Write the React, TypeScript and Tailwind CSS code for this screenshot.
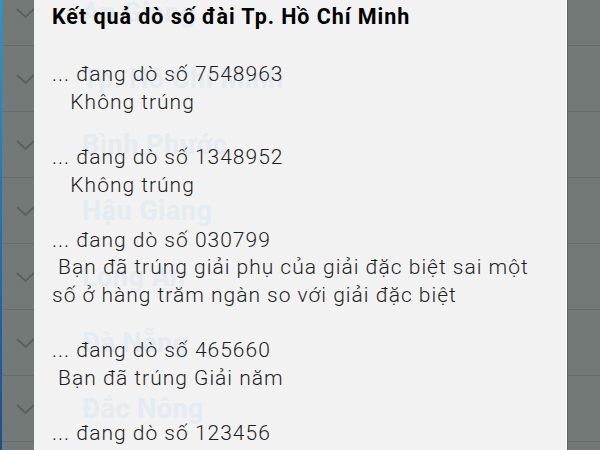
import React from "react";

const rows = ["An Giang", "Tp. Hồ Chí Minh", "Bình Phước", "Hậu Giang", "Long An", "Đà Nẵng", "Đắc Nông", "Quảng Nam"];

function Chevron() {
  return (
    <svg width="20" height="12" viewBox="0 0 20 12" className="shrink-0">
      <polyline points="1,2 9.5,10 18,2" fill="none" stroke="#5a615f" strokeWidth="2" />
    </svg>
  );
}

const lines = [
  "",
  "... đang dò số 7548963",
  "   Không trúng",
  "",
  "... đang dò số 1348952",
  "   Không trúng",
  "",
  "... đang dò số 030799",
  " Bạn đã trúng giải phụ của giải đặc biệt sai một",
  "số ở hàng trăm ngàn so với giải đặc biệt",
  "",
  "... đang dò số 465660",
  " Bạn đã trúng Giải năm",
  "",
  "... đang dò số 123456",
];

export default function App() {
  return (
    <div className="relative w-[600px] h-[450px] overflow-hidden bg-[#737977]" style={{ fontFamily: "Roboto, 'Noto Sans', sans-serif" }}>
      {/* list behind the dim */}
      <div className="flex flex-col -mt-[20px]">
        {rows.map((r) => (
          <div key={r} className="h-[66px] shrink-0 flex items-center border-b border-[#686e6c] pl-[16px]">
            <Chevron />
          </div>
        ))}
      </div>
      <div className="absolute left-0 top-0 bottom-0 w-[2px] bg-gradient-to-b from-[#1c9be0] to-[#1b4f8c]" />

      {/* dialog */}
      <div className="absolute top-0 bottom-0 left-[34px] w-[533px] bg-[#f2f2f2] border-r border-white shadow-[1px_0_0_#5c6260] overflow-hidden">
        <div className="absolute inset-0 flex flex-col -mt-[20px] pointer-events-none">
          {rows.map((r) => (
            <div key={r} className="h-[66px] shrink-0 flex items-center pl-[48px] text-[27px] font-bold tracking-[0.5px] text-[#e4ebf1]">
              {r}
            </div>
          ))}
        </div>
        <div className="relative pl-[18px] pt-[3px] text-[21px] font-light tracking-[1px] leading-[27.6px] text-[#1f1f1f]">
          <div className="text-[21.5px] font-bold tracking-[0.95px] text-black mb-[3px]">Kết quả dò số đài Tp. Hồ Chí Minh</div>
          {lines.map((l, i) => (
            <div key={i} className="whitespace-pre h-[27.6px]">{l}</div>
          ))}
        </div>
      </div>
    </div>
  );
}
